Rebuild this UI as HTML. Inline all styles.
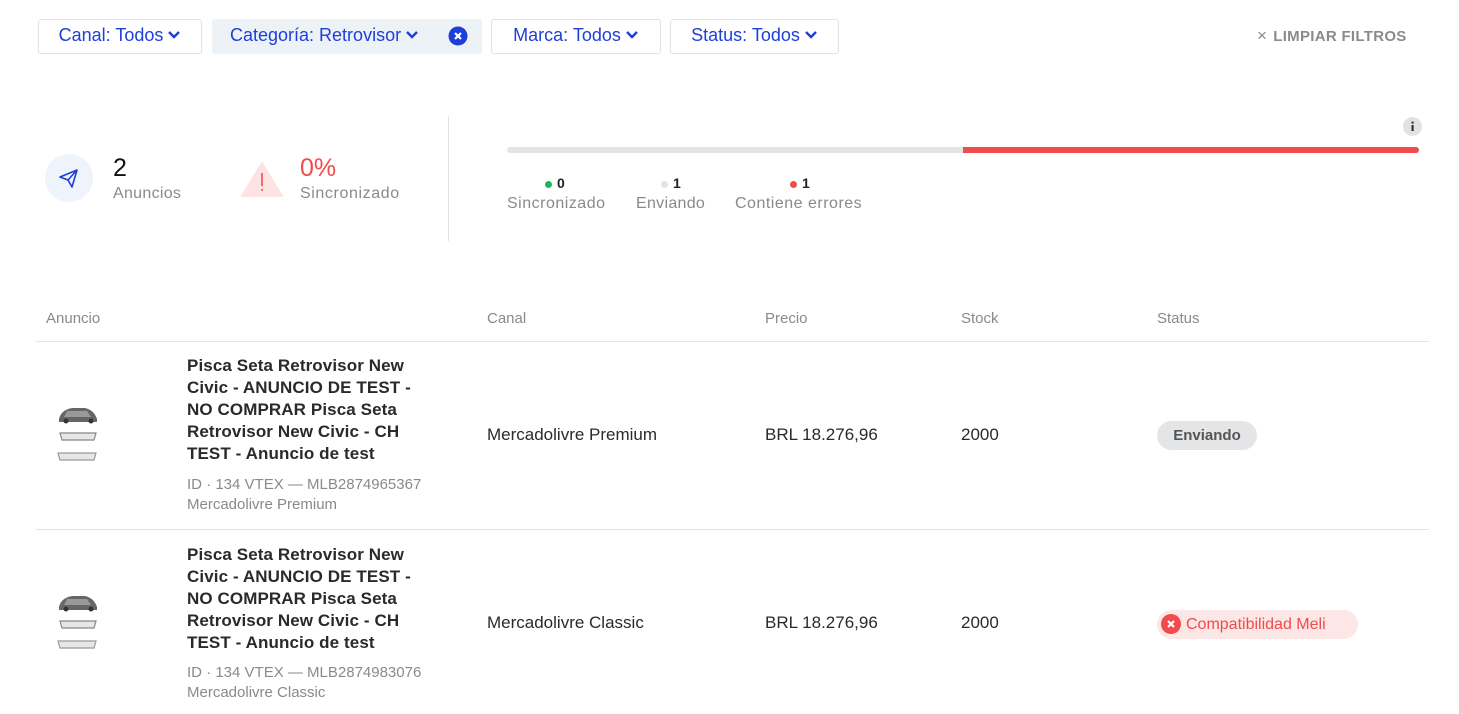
<!DOCTYPE html>
<html><head><meta charset="utf-8"><style>
*{margin:0;padding:0;box-sizing:border-box}
body{width:1459px;height:714px;background:#fff;font-family:"Liberation Sans",sans-serif;position:relative;overflow:hidden;color:#333}
.a{position:absolute;white-space:nowrap}
.chip{position:absolute;top:19px;height:35px;border:1px solid #e2e2e2;border-radius:3px;color:#1d3fd8;font-size:18px;display:flex;align-items:center;justify-content:center;gap:4px;padding-bottom:3px}
.chev{width:14px;height:10px}
.g{color:#8a8a8a;letter-spacing:.3px}
.th{position:absolute;top:310px;font-size:15px;color:#8a8a8a}
.line{position:absolute;left:36px;width:1393px;height:1px;background:#e4e4e4}
.title{position:absolute;left:187px;width:250px;font-size:17px;font-weight:bold;line-height:22px;color:#2a2a2a;letter-spacing:.1px}
.meta{position:absolute;left:187px;font-size:15px;line-height:20px;color:#8a8a8a}
.cell{position:absolute;font-size:17px;color:#2a2a2a}
</style></head><body>
<div class="chip" style="left:38px;width:164px">Canal: Todos <svg class="chev" viewBox="0 0 14 10"><path d="M2 2l5 5 5-5" stroke="#1d3fd8" stroke-width="2.4" fill="none"/></svg></div>
<div class="chip" style="left:212px;width:270px;background:#edf2f7;border-color:#edf2f7;justify-content:flex-start;padding-left:17px">Categoría: Retrovisor <svg class="chev" viewBox="0 0 14 10"><path d="M2 2l5 5 5-5" stroke="#1d3fd8" stroke-width="2.4" fill="none"/></svg>
<svg width="20" height="20" viewBox="0 0 20 20" style="position:absolute;left:235px;top:6px"><circle cx="10" cy="10" r="9.5" fill="#1d3fd8"/><path d="M7 7l6 6M13 7l-6 6" stroke="#fff" stroke-width="2.2"/></svg></div>
<div class="chip" style="left:491px;width:170px">Marca: Todos <svg class="chev" viewBox="0 0 14 10"><path d="M2 2l5 5 5-5" stroke="#1d3fd8" stroke-width="2.4" fill="none"/></svg></div>
<div class="chip" style="left:670px;width:169px">Status: Todos <svg class="chev" viewBox="0 0 14 10"><path d="M2 2l5 5 5-5" stroke="#1d3fd8" stroke-width="2.4" fill="none"/></svg></div>
<div class="a" style="left:1257px;top:26px;font-size:15px;font-weight:bold;color:#8a8a8a;letter-spacing:.3px"><span style="font-weight:normal;font-size:17px;margin-right:6px">×</span>LIMPIAR FILTROS</div>

<svg class="a" style="left:45px;top:154px" width="48" height="48" viewBox="0 0 48 48"><circle cx="24" cy="24" r="24" fill="#eef3fc"/><path d="M15 23l17-7-5 17-4-7zM23 26l9-10" stroke="#1d3fd8" stroke-width="1.6" fill="none" stroke-linejoin="round"/></svg>
<div class="a" style="left:113px;top:154px;font-size:25px;color:#111">2</div>
<div class="a g" style="left:113px;top:185px;font-size:16px">Anuncios</div>
<svg class="a" style="left:241px;top:161px" width="42" height="36" viewBox="0 0 42 36"><path d="M21 2L41 35H1z" fill="#fde3e3" stroke="#fde3e3" stroke-linejoin="round" stroke-width="2"/><path d="M21 12v13" stroke="#f24b4b" stroke-width="1.6"/><circle cx="21" cy="29" r="1" fill="#f24b4b"/></svg>
<div class="a" style="left:300px;top:154px;font-size:25px;color:#f24b4b">0%</div>
<div class="a g" style="left:300px;top:185px;font-size:16px;letter-spacing:.6px">Sincronizado</div>
<div class="a" style="left:448px;top:116px;width:1px;height:125px;background:#e2e2e2"></div>

<div class="a" style="left:507px;top:147px;width:456px;height:6px;background:#e4e4e6;border-radius:3px 0 0 3px"></div>
<div class="a" style="left:963px;top:147px;width:456px;height:6px;background:#f24b4b;border-radius:0 3px 3px 0"></div>
<svg class="a" style="left:1403px;top:117px" width="19" height="19" viewBox="0 0 19 19"><circle cx="9.5" cy="9.5" r="9.5" fill="#e2e2e4"/><rect x="8.5" y="8" width="2.2" height="6" fill="#333"/><rect x="8.5" y="4.6" width="2.2" height="2" fill="#333"/></svg>
<div class="a" style="left:545px;top:175px;font-size:14px;font-weight:bold;color:#222"><span style="display:inline-block;width:7px;height:7px;border-radius:50%;background:#22b45a;margin-right:5px"></span>0</div>
<div class="a g" style="left:507px;top:195px;font-size:16px;letter-spacing:.5px">Sincronizado</div>
<div class="a" style="left:661px;top:175px;font-size:14px;font-weight:bold;color:#222"><span style="display:inline-block;width:7px;height:7px;border-radius:50%;background:#e2e2e4;margin-right:5px"></span>1</div>
<div class="a g" style="left:636px;top:195px;font-size:16px">Enviando</div>
<div class="a" style="left:790px;top:175px;font-size:14px;font-weight:bold;color:#222"><span style="display:inline-block;width:7px;height:7px;border-radius:50%;background:#f24b4b;margin-right:5px"></span>1</div>
<div class="a g" style="left:735px;top:195px;font-size:16px;letter-spacing:.5px">Contiene errores</div>

<div class="th" style="left:46px">Anuncio</div>
<div class="th" style="left:487px">Canal</div>
<div class="th" style="left:765px">Precio</div>
<div class="th" style="left:961px">Stock</div>
<div class="th" style="left:1157px">Status</div>
<div class="line" style="top:341px"></div>
<div class="line" style="top:529px"></div>

<svg class="a" style="left:55px;top:403px" width="46" height="64" viewBox="0 0 46 64"><path d="M4 16q2-9 13-11h13q9 2 12 11v3H4z" fill="#666"/><path d="M12 8h20l4 6H9z" fill="#999"/><circle cx="11" cy="18" r="2.5" fill="#333"/><circle cx="36" cy="18" r="2.5" fill="#333"/><path d="M5 30h36l-2 7H7z" fill="#e6e6e6" stroke="#888" stroke-width="1.2"/><path d="M3 50h38l-2 7H5z" fill="#e6e6e6" stroke="#999" stroke-width="1.2"/></svg>
<svg class="a" style="left:55px;top:591px" width="46" height="64" viewBox="0 0 46 64"><path d="M4 16q2-9 13-11h13q9 2 12 11v3H4z" fill="#666"/><path d="M12 8h20l4 6H9z" fill="#999"/><circle cx="11" cy="18" r="2.5" fill="#333"/><circle cx="36" cy="18" r="2.5" fill="#333"/><path d="M5 30h36l-2 7H7z" fill="#e6e6e6" stroke="#888" stroke-width="1.2"/><path d="M3 50h38l-2 7H5z" fill="#e6e6e6" stroke="#999" stroke-width="1.2"/></svg>

<div class="title" style="top:355px">Pisca Seta Retrovisor New Civic - ANUNCIO DE TEST - NO COMPRAR Pisca Seta Retrovisor New Civic - CH TEST - Anuncio de test</div>
<div class="meta" style="top:475px">ID · 134 VTEX — MLB2874965367<br>Mercadolivre Premium</div>
<div class="cell" style="left:487px;top:425px">Mercadolivre Premium</div>
<div class="cell" style="left:765px;top:425px">BRL 18.276,96</div>
<div class="cell" style="left:961px;top:425px">2000</div>
<div class="a" style="left:1157px;top:421px;height:29px;width:100px;border-radius:15px;background:#e4e5e7;color:#555;font-weight:bold;font-size:15px;text-align:center;line-height:29px">Enviando</div>

<div class="title" style="top:544px">Pisca Seta Retrovisor New Civic - ANUNCIO DE TEST - NO COMPRAR Pisca Seta Retrovisor New Civic - CH TEST - Anuncio de test</div>
<div class="meta" style="top:663px">ID · 134 VTEX — MLB2874983076<br>Mercadolivre Classic</div>
<div class="cell" style="left:487px;top:613px">Mercadolivre Classic</div>
<div class="cell" style="left:765px;top:613px">BRL 18.276,96</div>
<div class="cell" style="left:961px;top:613px">2000</div>
<div class="a" style="left:1157px;top:610px;height:29px;width:201px;border-radius:15px;background:#fde6e6;color:#f24b4b;font-size:16px;line-height:29px;padding-left:29px">Compatibilidad Meli
<svg width="20" height="20" viewBox="0 0 20 20" style="position:absolute;left:4px;top:4px"><circle cx="10" cy="10" r="10" fill="#f24b4b"/><path d="M7 7l6 6M13 7l-6 6" stroke="#fff" stroke-width="2.2"/></svg></div>
</body></html>
